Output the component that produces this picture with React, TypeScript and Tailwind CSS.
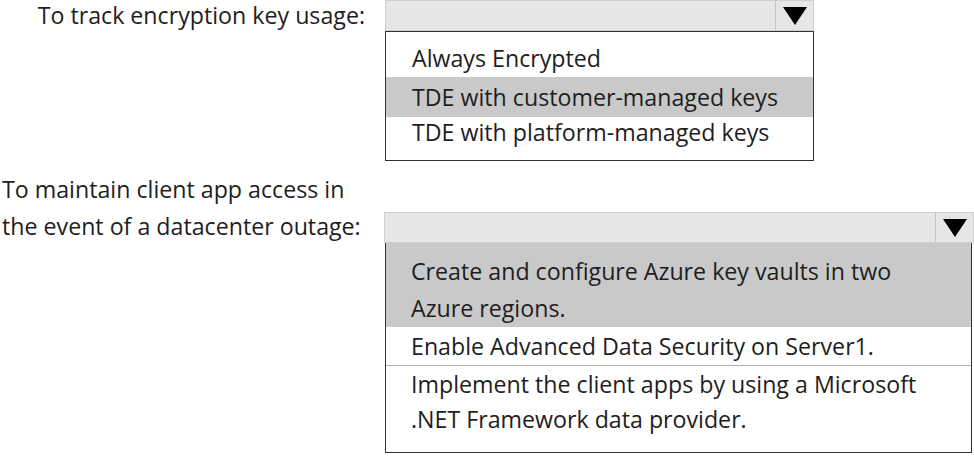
import React from "react";

function Arrow() {
  return (
    <svg width="24" height="18" viewBox="0 0 24 18">
      <polygon points="0,0 24,0 12,18" fill="#000" />
    </svg>
  );
}

function SelectBar({ width }: { width: string }) {
  return (
    <div className={`${width} h-[31px] flex bg-[#e6e6e6] border border-[#cfcfcf]`}>
      <div className="flex-1" />
      <div className="w-[38px] border-l border-[#c4c4c4] flex items-center justify-center">
        <Arrow />
      </div>
    </div>
  );
}

export default function App() {
  return (
    <div
      className="w-[974px] h-[456px] bg-white text-[#1e1e1e] text-[23.2px] overflow-hidden"
      style={{ fontFamily: '"Open Sans", "Noto Sans", sans-serif' }}
    >
      {/* Question 1 */}
      <div className="flex">
        <div className="w-[385px] h-[31px] pr-[20px] flex items-center justify-end">
          To track encryption key usage:
        </div>
        <div className="flex flex-col">
          <SelectBar width="w-[429px]" />
          <div className="w-[429px] h-[130px] border border-[#333]">
            <div className="h-[45px] pt-[8px] pl-[26px] flex items-center">Always Encrypted</div>
            <div className="h-[40px] pl-[26px] flex items-center bg-[#c9c9c9]">
              TDE with customer-managed keys
            </div>
            <div className="h-[31px] pl-[26px] flex items-center">TDE with platform-managed keys</div>
          </div>
        </div>
      </div>

      {/* Question 2 */}
      <div className="flex mt-[10px]">
        <div className="w-[385px] pl-[2px] leading-[37px]">
          To maintain client app access in
          <br />
          the event of a datacenter outage:
        </div>
        <div className="flex flex-col mt-[41px] ml-[-1px]">
          <SelectBar width="w-[590px]" />
          <div className="w-[587px] h-[210px] ml-[1px] border border-[#333] border-t-0">
            <div className="h-[84px] pt-[10px] pl-[25px] leading-[37px] bg-[#c9c9c9]">
              Create and configure Azure key vaults in two
              <br />
              Azure regions.
            </div>
            <div className="h-[39px] pl-[25px] flex items-center border-b border-[#b0b0b0]">
              Enable Advanced Data Security on Server1.
            </div>
            <div className="pt-[1px] pl-[25px] leading-[35px]">
              Implement the client apps by using a Microsoft
              <br />
              .NET Framework data provider.
            </div>
          </div>
        </div>
      </div>
    </div>
  );
}
